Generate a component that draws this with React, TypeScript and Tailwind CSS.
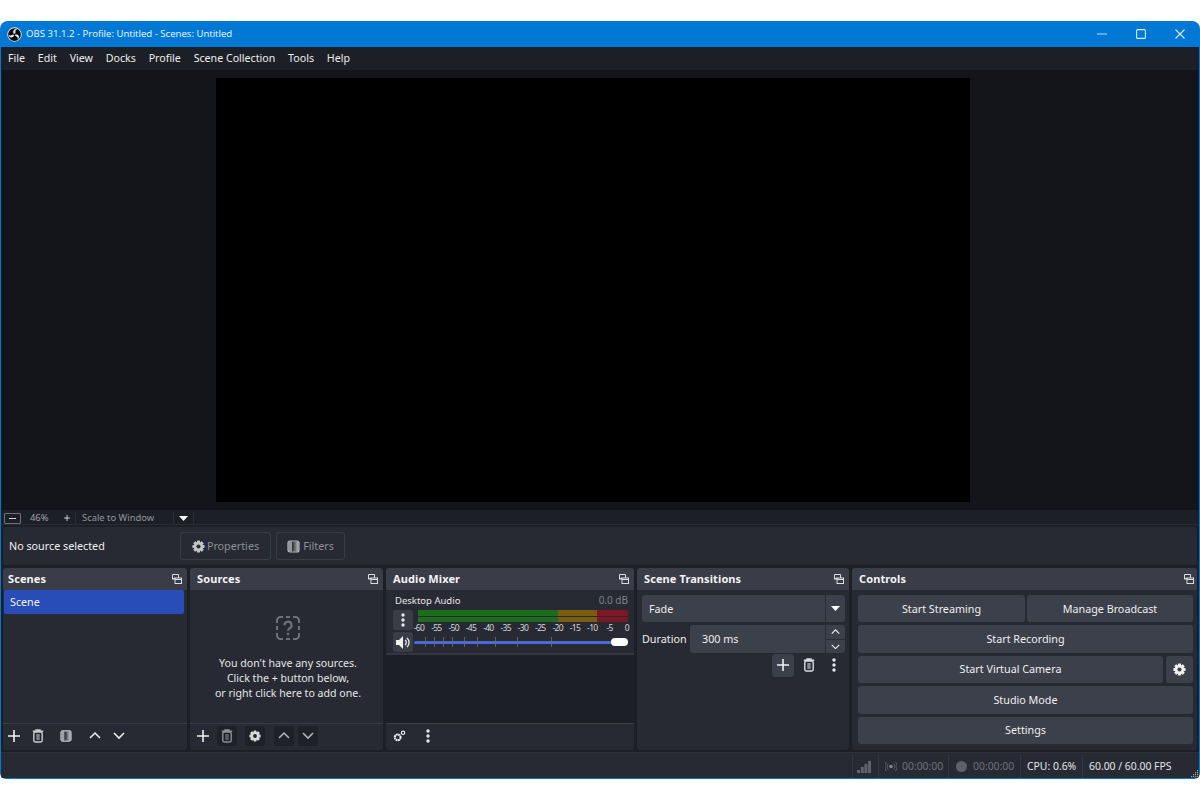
import React from "react";

const Dots = () => (
  <svg width="4" height="14" viewBox="0 0 4 14" fill="#e8e8ea"><circle cx="2" cy="2" r="1.7"/><circle cx="2" cy="7" r="1.7"/><circle cx="2" cy="12" r="1.7"/></svg>
);
const Plus = ({ s = 12 }: { s?: number }) => (
  <svg width={s} height={s} viewBox="0 0 12 12" stroke="#f2f2f2" strokeWidth="1.6"><path d="M6 0v12M0 6h12"/></svg>
);
const Trash = ({ c = "#c9cacd", s = 14 }: { c?: string; s?: number }) => (
  <svg width={s} height={s} viewBox="0 0 12 14" fill="none" stroke={c} strokeWidth="1.4"><path d="M.8 2.200h10.400M4 2V1h4v1"/><rect x="1.800" y="3" width="8.400" height="10" rx="1.400"/><rect x="4.300" y="5" width="3.400" height="6" fill={c} stroke="none" opacity="0.55"/></svg>
);
const Gear = ({ s = 14, c = "#e6e6e8", hole = "#272a33" }: { s?: number; c?: string; hole?: string }) => (
  <svg width={s} height={s} viewBox="0 0 24 24">
    {[0, 45, 90, 135].map((a) => <rect key={a} x="9.200" y=".8" width="5.600" height="22.400" rx="1" fill={c} transform={`rotate(${a} 12 12)`} />)}
    <circle cx="12" cy="12" r="8.400" fill={c} />
    <circle cx="12" cy="12" r="3.800" fill={hole} />
  </svg>
);
const FilterIcon = ({ c = "#b9bbc0", s = 13, id }: { c?: string; s?: number; id: string }) => (
  <svg width={s} height={s} viewBox="0 0 13 13">
    <defs><linearGradient id={id} x1="0" x2="1"><stop offset="0" stopColor="#26282f"/><stop offset="1" stopColor={c}/></linearGradient></defs>
    <rect x="1.500" y="1.500" width="3.500" height="10" fill={c} opacity="0.75"/>
    <rect x="5" y="1.500" width="6.500" height="10" fill={`url(#${id})`}/>
    <rect x="1" y="1" width="11" height="11" rx="2" fill="none" stroke={c} strokeWidth="1.200"/>
  </svg>
);
const Chev = ({ up, c = "#f0f0f0", w = 12 }: { up?: boolean; c?: string; w?: number }) => (
  <svg width={w} height={w * 0.6} viewBox="0 0 12 7" fill="none" stroke={c} strokeWidth="1.500"><path d={up ? "M1 6l5-5 5 5" : "M1 1l5 5 5-5"}/></svg>
);
const Caret = () => (
  <svg width="9" height="5" viewBox="0 0 9 5" fill="#fff"><path d="M0 0h9L4.500 5z"/></svg>
);
const FloatIcon = () => (
  <svg width="10" height="10" viewBox="0 0 10 10" fill="none" stroke="#dcdde0" strokeWidth="1"><path d="M.5.5h6v3.500M3 4V5H.5z"/><path d="M.5.5V5"/><rect x="3" y="4" width="6.500" height="5.500"/><path d="M3 5.500h6.500"/></svg>
);
const GearsIcon = () => (
  <svg width="13" height="12" viewBox="0 0 13 12" fill="none" stroke="#f0f0f0">
    <circle cx="4.700" cy="7.300" r="2.900" strokeWidth="2" strokeDasharray="1.900 0.400"/>
    <circle cx="10" cy="2.800" r="1.700" strokeWidth="1.100"/>
  </svg>
);

const Dock = ({ title, className, head = "pl-[7px] pr-[5px]", children }: { title: string; className: string; head?: string; children: React.ReactNode }) => (
  <div className={`flex flex-col h-full bg-[#272a33] rounded-[3px] overflow-hidden ${className}`}>
    <div className={`h-[22px] shrink-0 bg-[#3a3d48] flex items-center justify-between ${head}`}>
      <span className="text-[11px] font-bold text-[#f4f4f5] tracking-[0.1px]">{title}</span>
      <FloatIcon />
    </div>
    {children}
  </div>
);

const Tool = ({ children, on, className = "" }: { children: React.ReactNode; on?: boolean; className?: string }) => (
  <div className={`w-5 h-5 flex items-center justify-center rounded-[3px] ${on ? "bg-[#1f2128]" : ""} ${className}`}>{children}</div>
);

const Btn = ({ children, className = "" }: { children: React.ReactNode; className?: string }) => (
  <div className={`h-[27.4px] bg-[#3c404b] rounded-[3px] flex items-center justify-center text-[10.75px] text-[#eeeeef] ${className}`}>{children}</div>
);

const MENU = ["File", "Edit", "View", "Docks", "Profile", "Scene Collection", "Tools", "Help"];
const DB = ["-60", "-55", "-50", "-45", "-40", "-35", "-30", "-25", "-20", "-15", "-10", "-5", "0"];
const TICKS = [11, 20, 29, 38, 50, 63, 81, 103, 137];

export default function App() {
  return (
    <div className="w-[1200px] h-[800px] bg-white pt-[21px] overflow-hidden" style={{ fontFamily: '"Noto Sans", "Open Sans", sans-serif' }}>
      <div className="w-[1200px] h-[758px] flex flex-col rounded-t-[8px] rounded-b-[6px] overflow-hidden bg-[#0078d4] px-px pb-[1px]">
        <div className="h-[26px] shrink-0 flex items-center text-white pl-[6px]">
          <svg width="15" height="15" viewBox="0 0 16 16" className="mr-[4px]">
            <circle cx="8" cy="8" r="7.700" fill="#e9e9e9"/>
            <circle cx="8" cy="8" r="6.800" fill="#0a0a0c"/>
            {[0, 120, 240].map((a) => (
              <path key={a} d="M8 8C6.200 6.600 6 4 7.800 2.600 8.800 1.900 10.200 1.900 11.200 2.500 9.600 2.600 8.800 3.800 9 5.200 9.100 6.200 8.800 7.200 8 8z" fill="#e9e9e9" transform={`rotate(${a} 8 8)`} />
            ))}
            <circle cx="8" cy="8" r="1" fill="#0a0a0c"/>
          </svg>
          <span className="text-[9.600px] text-[#f2f8fd]" style={{ fontFamily: '"Open Sans", sans-serif' }}>OBS 31.1.2 - Profile: Untitled - Scenes: Untitled</span>
          <div className="ml-auto flex items-center h-full">
            <div className="w-[39px] flex justify-center"><svg width="10" height="10" viewBox="0 0 10 10" stroke="#bcdcf5" strokeWidth="1.100"><path d="M0 5h10"/></svg></div>
            <div className="w-[39px] flex justify-center"><svg width="10" height="10" viewBox="0 0 10 10" fill="none" stroke="#d8ebfa" strokeWidth="1.100"><rect x=".6" y=".6" width="8.800" height="8.800" rx="1"/></svg></div>
            <div className="w-[39px] flex justify-center"><svg width="10" height="10" viewBox="0 0 10 10" stroke="#d8ebfa" strokeWidth="1.100"><path d="M.5.5l9 9M9.500.5l-9 9"/></svg></div>
          </div>
        </div>

        <div className="flex-1 flex flex-col bg-[#1d1f26] min-h-0">
          <div className="h-[23px] shrink-0 flex items-center pl-[7px] gap-[12.800px] text-[10.650px] text-[#eeeeef]">
            {MENU.map((m) => <span key={m}>{m}</span>)}
          </div>

          <div className="h-[440px] shrink-0 bg-[#14151a] flex justify-center items-center pr-[12px]">
            <div className="w-[754px] h-[424px] bg-black ml-[-2px]" />
          </div>

          <div className="h-[15px] shrink-0 flex items-center text-[9.400px] text-[#92949b] border-b border-[#2a2c35] pt-[2px]">
            <div className="w-[17px] h-[11px] ml-[3px] border border-[#6e7078] rounded-[1px] flex items-center justify-center"><div className="w-[7px] h-px bg-[#d5d5d8]" /></div>
            <span className="w-[27px] ml-[9px] text-[#a0a2a8]">46%</span>
            <div className="ml-[5px] w-[9px] flex justify-center"><Plus s={6} /></div>
            <div className="ml-[4px] h-full w-[99px] border-x border-[#2a2c35] pl-[6px] flex items-center">Scale to Window</div>
            <div className="w-[20px] h-full border-r border-[#2a2c35] flex items-center justify-center"><Caret /></div>
          </div>

          <div className="h-[38px] shrink-0 mt-[2px] mx-[2px] bg-[#272a33] rounded-[3px] flex items-center pl-[6px] text-[10.750px] text-[#f0f0f1]">
            <span className="w-[171px]">No source selected</span>
            <div className="w-[91px] h-[28px] rounded-[3px] border border-[#3a3d48] flex items-center justify-center gap-[2px] text-[#8d8f95]">
              <Gear s={13} c="#c3c4c8" /><span>Properties</span>
            </div>
            <div className="w-[69px] h-[28px] ml-[5px] rounded-[3px] border border-[#3a3d48] flex items-center justify-center gap-[3px] text-[#8d8f95]">
              <FilterIcon id="f1" /><span>Filters</span>
            </div>
          </div>

          <div className="h-[182px] shrink-0 mt-[3px] mx-[2px] flex gap-[3px]">
            <Dock title="Scenes" className="w-[184px]" head="pl-[5px] pr-[5px]">
              <div className="flex-1 pl-px pr-[3px]">
                <div className="h-[24px] bg-[#284cb8] rounded-[2px] flex items-center pl-[6px] pt-px text-[10.750px] text-[#f4f4f6]">Scene</div>
              </div>
              <div className="h-[27px] shrink-0 border-t border-[#3a3d48] flex items-center pl-px pb-[2px]">
                <Tool><Plus /></Tool>
                <Tool className="ml-[4px]"><Trash /></Tool>
                <Tool className="ml-[8px]"><FilterIcon id="f2" c="#c9cacd" s={12} /></Tool>
                <Tool className="ml-[9px]"><Chev up /></Tool>
                <Tool className="ml-[4px]"><Chev /></Tool>
              </div>
            </Dock>

            <Dock title="Sources" className="w-[193px]">
              <div className="flex-1 flex flex-col items-center pt-[26px] pl-[3px] text-[10.600px] leading-[15px] text-[#e6e6e8] text-center">
                <svg width="24" height="24" viewBox="0 0 24 24" fill="none" stroke="#6e7179" strokeWidth="2" className="mb-[16px]">
                  <path d="M7 1H4.500A3.500 3.500 0 0 0 1 4.500V7M1 10v4M1 17v2.500A3.500 3.500 0 0 0 4.500 23H7M10 1h4M10 23h4M17 1h2.500A3.500 3.500 0 0 1 23 4.500V7M23 10v4M23 17v2.500a3.500 3.500 0 0 1-3.500 3.500H17"/>
                  <path d="M8.500 9.200A3.500 3.500 0 1 1 13.500 12.400C12.500 13 12 13.500 12 14.800" strokeWidth="2.200"/>
                  <circle cx="12" cy="18" r="1.300" fill="#6e7179" stroke="none"/>
                </svg>
                <span>You don't have any sources.</span>
                <span>Click the + button below,</span>
                <span>or right click here to add one.</span>
              </div>
              <div className="h-[27px] shrink-0 border-t border-[#3a3d48] flex items-center pl-[3px] pb-[2px]">
                <Tool><Plus /></Tool>
                <Tool on className="ml-[4px]"><Trash c="#8e9096" /></Tool>
                <Tool on className="ml-[8px]"><Gear s={12} c="#d8d9dc" hole="#1f2128" /></Tool>
                <Tool on className="ml-[9px]"><Chev up c="#b5b6ba" /></Tool>
                <Tool on className="ml-[4px]"><Chev c="#b5b6ba" /></Tool>
              </div>
            </Dock>

            <Dock title="Audio Mixer" className="w-[248px]">
              <div className="h-[65px] shrink-0 px-[7px] border-b-2 border-[#343741] pt-[4px]">
                <div className="flex justify-between items-center h-[15px] pl-[2px] text-[9.500px]">
                  <span className="text-[#e6e6e8]">Desktop Audio</span>
                  <span className="text-[#7f8187] text-[10px] mr-[-1px] mt-[-2px]">0.0 dB</span>
                </div>
                <div className="flex mt-[1px] h-[20px]">
                  <div className="w-5 h-5 rounded-[3px] bg-[#3a3d48] flex items-center justify-center shrink-0"><Dots /></div>
                  <div className="ml-[5px] flex-1 mr-[-1px]">
                    <div className="h-[12px] flex flex-col gap-px">
                      <div className="flex flex-1"><div className="w-[140px] bg-[#1d6d1e]" /><div className="w-[39px] bg-[#7b5d10]" /><div className="flex-1 bg-[#7d1724]" /></div>
                      <div className="flex flex-1"><div className="w-[140px] bg-[#1d6d1e]" /><div className="w-[39px] bg-[#7b5d10]" /><div className="flex-1 bg-[#7d1724]" /></div>
                    </div>
                    <div className="flex justify-between text-[8.500px] leading-[10px] tracking-[-0.7px] text-[#d6d7da] mt-px px-px">
                      {DB.map((d) => <div key={d} className="w-0 flex justify-center"><span>{d}</span></div>)}
                    </div>
                  </div>
                </div>
                <div className="flex items-center mt-[2px]">
                  <div className="w-5 h-5 rounded-[3px] bg-[#3a3d48] flex items-center justify-center shrink-0">
                    <svg width="15" height="13" viewBox="0 0 15 13" fill="none"><path d="M0 4h3l4-4v13l-4-4H0z" fill="#f0f0f0"/><path d="M9 4a3 3 0 0 1 0 5M11 2a6 6 0 0 1 0 9" stroke="#f0f0f0" strokeWidth="1.300"/></svg>
                  </div>
                  <div className="relative ml-px flex-1 h-[12px] mr-[-1px] flex items-center">
                    <div className="w-full h-[3px] bg-[#4a6bd6] rounded-full" />
                    {TICKS.map((t) => <div key={t} className="absolute top-px w-px h-[10px] bg-[#6b6e76] opacity-80" style={{ left: t }} />)}
                    <div className="absolute right-0 top-[2px] w-[17px] h-[8px] bg-white rounded-[4px]" />
                  </div>
                </div>
              </div>
              <div className="flex-1 bg-[#1d1f26]" />
              <div className="h-[27px] shrink-0 border-t border-[#3a3d48] flex items-center pl-[3px] pb-[2px]">
                <Tool><GearsIcon /></Tool>
                <Tool className="ml-[9px]"><Dots /></Tool>
              </div>
            </Dock>

            <Dock title="Scene Transitions" className="w-[212px]">
              <div className="flex-1 flex flex-col pl-[5px] pr-[4px] pt-[5px] gap-[3px] text-[10.750px] text-[#eeeeef]">
                <div className="h-[27.400px] bg-[#3c404b] rounded-[3px] flex items-center pl-[7px]">
                  <span className="flex-1">Fade</span>
                  <div className="w-[20px] h-full border-l border-[#2c2e37] flex items-center justify-center"><Caret /></div>
                </div>
                <div className="flex items-center h-[27.400px]">
                  <span className="w-[48px]">Duration</span>
                  <div className="flex-1 h-full bg-[#3c404b] rounded-[3px] flex items-center pl-[12px]">
                    <span className="flex-1">300 ms</span>
                    <div className="w-[20px] h-full border-l border-[#2c2e37] flex flex-col">
                      <div className="flex-1 flex items-center justify-center border-b border-[#2c2e37]"><Chev up w={9} /></div>
                      <div className="flex-1 flex items-center justify-center"><Chev w={9} /></div>
                    </div>
                  </div>
                </div>
                <div className="flex justify-end items-center h-[23px] pr-[9px] mt-[-2px]">
                  <div className="w-[22px] h-[23px] bg-[#3c404b] rounded-[4px] flex items-center justify-center"><Plus /></div>
                  <div className="w-[14px] ml-[8px] flex justify-center"><Trash s={14} c="#dcdde0" /></div>
                  <div className="w-[4px] ml-[16px] flex justify-center"><Dots /></div>
                </div>
              </div>
            </Dock>

            <Dock title="Controls" className="w-[345px]" head="pl-[7px] pr-[3px]">
              <div className="flex-1 flex flex-col pl-[6px] pr-[4px] pt-[5px] gap-[3px]">
                <div className="flex gap-[2px]">
                  <Btn className="w-[167px]">Start Streaming</Btn>
                  <Btn className="flex-1">Manage Broadcast</Btn>
                </div>
                <Btn>Start Recording</Btn>
                <div className="flex gap-[3px]">
                  <Btn className="flex-1">Start Virtual Camera</Btn>
                  <Btn className="w-[27px]"><Gear s={13} c="#f0f0f0" hole="#3c404b" /></Btn>
                </div>
                <Btn>Studio Mode</Btn>
                <Btn>Settings</Btn>
              </div>
            </Dock>
          </div>

          <div className="flex-1 mt-[2px] bg-[#272a33] border-t border-[#2e3039] flex items-center justify-end text-[10.400px] text-[#e6e6e8] relative pt-[2px]">
            <div className="w-[26px] h-full border-l border-[#33363f] flex items-center pl-[4px]">
              <svg width="14" height="12" viewBox="0 0 14 12" fill="#5f6269"><rect x="0" y="9" width="3" height="3"/><rect x="3.800" y="6" width="3" height="6"/><rect x="7.400" y="3" width="3" height="9"/><rect x="11" y="0" width="3" height="12"/></svg>
            </div>
            <div className="w-[70px] h-full border-l border-[#33363f] flex items-center pl-[6px] gap-[5px] text-[#6f7178]">
              <svg width="12" height="9" viewBox="0 0 12 9" fill="none" stroke="#5f6169" strokeWidth="1"><circle cx="6" cy="4.500" r="1.800" fill="#85878d" stroke="none"/><path d="M3.400 1.500a4 4 0 0 0 0 6M8.600 1.500a4 4 0 0 1 0 6M1.500 0a7 7 0 0 0 0 9M10.500 0a7 7 0 0 1 0 9"/></svg>
              <span>00:00:00</span>
            </div>
            <div className="w-[72px] h-full border-l border-[#33363f] flex items-center pl-[7px] gap-[6px] text-[#6f7178]">
              <div className="w-[11px] h-[11px] rounded-full bg-[#5f6169]" />
              <span>00:00:00</span>
            </div>
            <div className="w-[62px] h-full border-l border-[#33363f] flex items-center pl-[6px]">CPU: 0.6%</div>
            <div className="w-[117px] h-full border-l border-[#33363f] flex items-center pl-[6px]">60.00 / 60.00 FPS</div>
            <svg width="8" height="8" viewBox="0 0 8 8" fill="#9a9ca2" className="absolute right-0 bottom-0"><rect x="6" y="0" width="1.200" height="1.200"/><rect x="4" y="2" width="1.200" height="1.200"/><rect x="6" y="2" width="1.200" height="1.200"/><rect x="2" y="4" width="1.200" height="1.200"/><rect x="4" y="4" width="1.200" height="1.200"/><rect x="6" y="4" width="1.200" height="1.200"/><rect x="0" y="6" width="1.200" height="1.200"/><rect x="2" y="6" width="1.200" height="1.200"/><rect x="4" y="6" width="1.200" height="1.200"/><rect x="6" y="6" width="1.200" height="1.200"/></svg>
          </div>
        </div>
      </div>
    </div>
  );
}
